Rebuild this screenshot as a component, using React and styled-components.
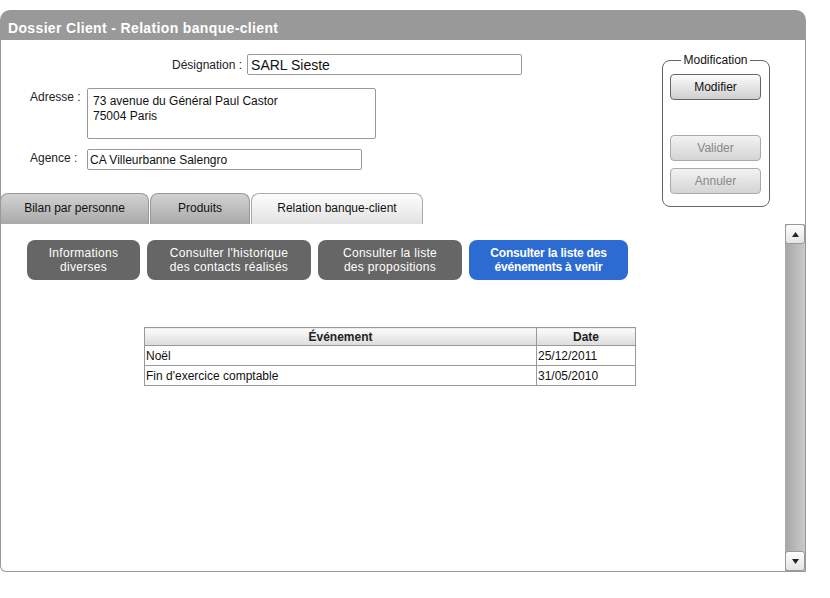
import React from "react";
import styled, { createGlobalStyle } from "styled-components";

const Global = createGlobalStyle`
  html, body { margin: 0; padding: 0; background: #fff; }
  body { font-family: "Liberation Sans", Arial, sans-serif; font-size: 12px; color: #111; }
`;

const Window = styled.div`
  margin-top: 10px;
  width: 806px;
  height: 562px;
  display: flex;
  flex-direction: column;
`;

const TitleBar = styled.div`
  height: 30px;
  flex: none;
  background: #999;
  border-radius: 10px 10px 0 0;
  color: #fff;
  font-weight: bold;
  font-size: 14px;
  letter-spacing: 0.35px;
  display: flex;
  align-items: flex-end;
  padding: 0 0 4px 8px;
  box-sizing: border-box;
`;

const Body = styled.div`
  flex: 1;
  display: flex;
  flex-direction: column;
  border-left: 1px solid #999;
  border-right: 1px solid #999;
  border-bottom: 1px solid #999;
  border-radius: 0 0 0 6px;
  min-height: 0;
`;

const Top = styled.div`
  height: 184px;
  flex: none;
  display: flex;
`;

const FormCol = styled.div`
  flex: 1;
  display: flex;
  flex-direction: column;
  padding-top: 14px;
`;

const Row = styled.div`
  display: flex;
  align-items: ${(p) => (p.$center ? "center" : "flex-start")};
  padding-left: ${(p) => p.$indent}px;
  margin-top: ${(p) => p.$gap || 0}px;
`;

const Label = styled.label`
  width: ${(p) => (p.$w ? p.$w + "px" : "auto")};
  margin-right: ${(p) => p.$mr || 0}px;
  padding-top: ${(p) => (p.$center ? 0 : 2)}px;
  font-size: 12px;
  color: #222;
  flex: none;
`;

const Field = styled.div`
  box-sizing: border-box;
  width: ${(p) => p.$w}px;
  height: ${(p) => p.$h}px;
  border: 1px solid #999;
  border-radius: 2px;
  background: #fff;
  padding: ${(p) => p.$pad};
  font-size: ${(p) => p.$fs || 12}px;
  line-height: ${(p) => p.$lh || "normal"};
  color: #111;
  white-space: pre-line;
  display: flex;
  align-items: ${(p) => (p.$multi ? "flex-start" : "center")};
`;

const Tabs = styled.div`
  display: flex;
  gap: 1px;
  margin-top: 23px;
  margin-left: -1px;
`;

const Tab = styled.div`
  box-sizing: border-box;
  width: ${(p) => p.$w}px;
  height: 31px;
  border: 1px solid ${(p) => (p.$active ? "#aaa" : "#999")};
  border-bottom: none;
  border-radius: 8px 8px 0 0;
  background: ${(p) =>
    p.$active
      ? "linear-gradient(#fdfdfd, #e2e2e2)"
      : "linear-gradient(#d2d2d2, #a9a9a9)"};
  display: flex;
  align-items: center;
  justify-content: center;
  font-size: 12px;
  color: #111;
  padding-bottom: 2px;
`;

const Fieldset = styled.fieldset`
  box-sizing: border-box;
  width: 108px;
  height: 154px;
  margin: 13px 35px 0 0;
  padding: 7px 8px 0 7px;
  border: 1px solid #666;
  border-radius: 8px;
  display: flex;
  flex-direction: column;
  gap: 7px;
`;

const Legend = styled.legend`
  font-size: 12px;
  padding: 0 2px;
  margin: 0 auto;
  color: #111;
`;

const Button = styled.div`
  box-sizing: border-box;
  width: 91px;
  height: 26px;
  border: 1px solid ${(p) => (p.$disabled ? "#aaa" : "#666")};
  border-radius: 4px;
  background: ${(p) =>
    p.$disabled
      ? "linear-gradient(#f2f2f2, #d4d4d4)"
      : "linear-gradient(#fbfbfb, #cfcfcf)"};
  color: ${(p) => (p.$disabled ? "#888" : "#111")};
  display: flex;
  align-items: center;
  justify-content: center;
  font-size: 12px;
  margin-top: ${(p) => p.$mt || 0}px;
`;

const Lower = styled.div`
  flex: 1;
  display: flex;
  min-height: 0;
`;

const Content = styled.div`
  flex: 1;
  padding: 16px 0 0 26px;
`;

const Actions = styled.div`
  display: flex;
  gap: 7px;
`;

const Action = styled.div`
  box-sizing: border-box;
  width: ${(p) => p.$w}px;
  height: 40px;
  border-radius: 8px;
  background: ${(p) => (p.$active ? "#2b6bd2" : "#666")};
  color: #fff;
  font-weight: ${(p) => (p.$active ? "bold" : "normal")};
  font-size: 12px;
  line-height: 14px;
  text-align: center;
  display: flex;
  align-items: center;
  justify-content: center;
  letter-spacing: ${(p) => (p.$active ? "-0.2px" : "0.3px")};
`;

const Table = styled.table`
  margin: 47px 0 0 117px;
  width: 492px;
  border-collapse: collapse;
  font-size: 12px;
  th, td {
    border: 1px solid #999;
    padding: 0 1px;
  }
  th {
    height: 17px;
    background: linear-gradient(#fcfcfc, #dcdcdc);
    font-weight: bold;
    color: #222;
  }
  td {
    height: 19px;
    color: #111;
  }
`;

const Scrollbar = styled.div`
  width: 20px;
  flex: none;
  display: flex;
  flex-direction: column;
  background: linear-gradient(90deg, #a6a6a6, #c9c9c9);
`;

const ScrollButton = styled.div`
  box-sizing: border-box;
  height: 20px;
  border: 1px solid #999;
  border-radius: 3px;
  background: linear-gradient(#fdfdfd, #e4e4e4);
  display: flex;
  align-items: center;
  justify-content: center;
`;

const Track = styled.div`
  flex: 1;
`;

const Arrow = ({ down }) => (
  <svg width="7" height="5" viewBox="0 0 7 5">
    <path d={down ? "M0 0h7L3.5 5z" : "M3.5 0L7 5H0z"} fill="#222" />
  </svg>
);

const events = [
  ["Noël", "25/12/2011"],
  ["Fin d'exercice comptable", "31/05/2010"],
];

export default function App() {
  return (
    <>
      <Global />
      <Window>
        <TitleBar>Dossier Client - Relation banque-client</TitleBar>
        <Body>
          <Top>
            <FormCol>
              <Row $indent={171} $center>
                <Label $mr={5} $center>Désignation :</Label>
                <Field $w={275} $h={21} $pad="0 0 0 3px" $fs={14}>SARL Sieste</Field>
              </Row>
              <Row $indent={29} $gap={13}>
                <Label $w={57}>Adresse :</Label>
                <Field $w={289} $h={51} $pad="5px 5px" $lh="15px" $multi>
                  {"73 avenue du Général Paul Castor\n75004 Paris"}
                </Field>
              </Row>
              <Row $indent={29} $gap={10}>
                <Label $w={57}>Agence :</Label>
                <Field $w={275} $h={21} $pad="0 0 0 2px">CA Villeurbanne Salengro</Field>
              </Row>
              <Tabs>
                <Tab $w={149}>Bilan par personne</Tab>
                <Tab $w={100}>Produits</Tab>
                <Tab $w={172} $active>Relation banque-client</Tab>
              </Tabs>
            </FormCol>
            <Fieldset>
              <Legend>Modification</Legend>
              <Button>Modifier</Button>
              <Button $disabled $mt={28}>Valider</Button>
              <Button $disabled>Annuler</Button>
            </Fieldset>
          </Top>
          <Lower>
            <Content>
              <Actions>
                <Action $w={113}>Informations<br />diverses</Action>
                <Action $w={164}>Consulter l'historique<br />des contacts réalisés</Action>
                <Action $w={144}>Consulter la liste<br />des propositions</Action>
                <Action $w={159} $active>Consulter la liste des<br />événements à venir</Action>
              </Actions>
              <Table>
                <thead>
                  <tr>
                    <th style={{ width: 389 }}>Événement</th>
                    <th>Date</th>
                  </tr>
                </thead>
                <tbody>
                  {events.map(([name, date]) => (
                    <tr key={name}>
                      <td>{name}</td>
                      <td>{date}</td>
                    </tr>
                  ))}
                </tbody>
              </Table>
            </Content>
            <Scrollbar>
              <ScrollButton><Arrow /></ScrollButton>
              <Track />
              <ScrollButton><Arrow down /></ScrollButton>
            </Scrollbar>
          </Lower>
        </Body>
      </Window>
    </>
  );
}
